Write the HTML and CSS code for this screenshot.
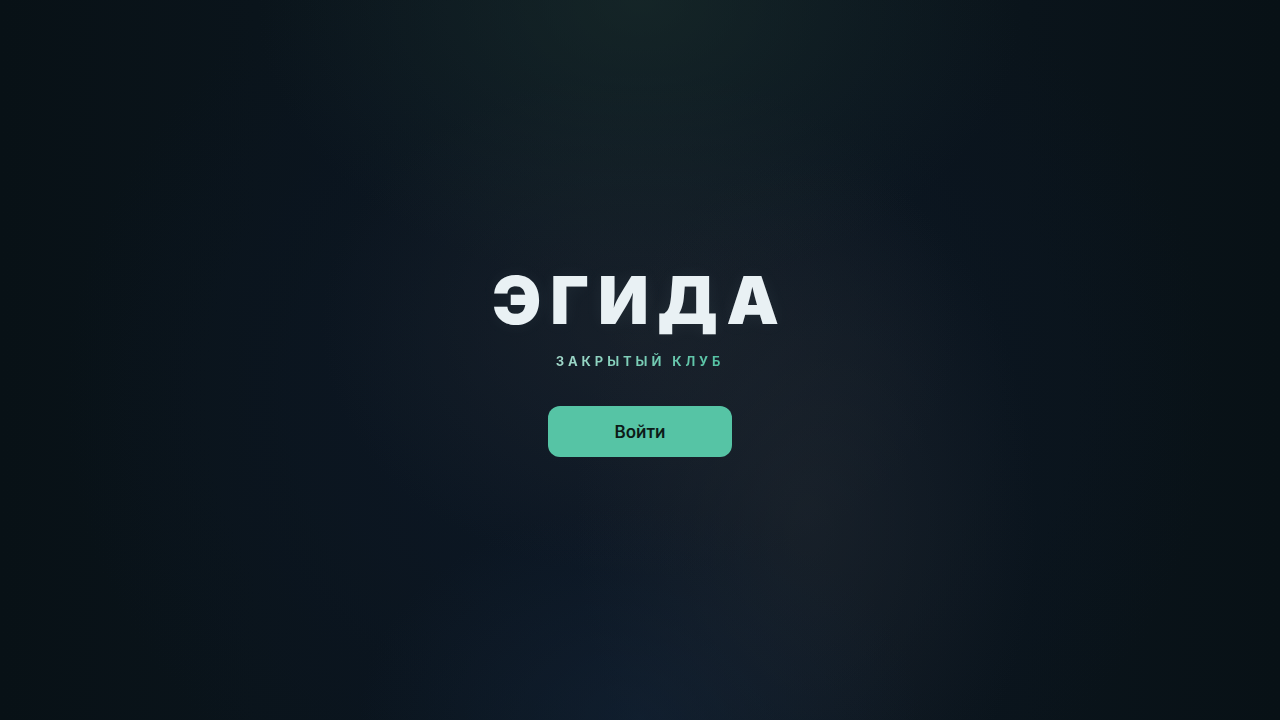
FILE: index.html
```html
<!DOCTYPE html>
<html lang="ru">
<head>
<meta charset="utf-8">
<title>Эгида</title>
<link rel="stylesheet" href="styles.css">
</head>
<body>
<main class="hero">
  <h1 class="title">ЭГИДА</h1>
  <p class="subtitle">ЗАКРЫТЫЙ КЛУБ</p>
  <button class="enter">Войти</button>
</main>
</body>
</html>
```

FILE: styles.css
```css
html, body {
  margin: 0;
  height: 100%;
}
body {
  font-family: Inter, "Noto Sans", sans-serif;
  background-color: #0a131b;
  background-image:
    radial-gradient(ellipse 30% 40% at 50% 0%, rgba(30, 52, 46, 0.5), rgba(30, 52, 46, 0) 100%),
    radial-gradient(ellipse 22% 30% at 50% 100%, rgba(22, 40, 62, 0.45), rgba(22, 40, 62, 0) 100%),
    radial-gradient(ellipse 18% 50% at 63% 72%, rgba(38, 44, 50, 0.45), rgba(38, 44, 50, 0) 100%),
    radial-gradient(ellipse 25% 35% at 50% 45%, rgba(34, 40, 46, 0.5), rgba(34, 40, 46, 0) 100%),
    radial-gradient(ellipse 45% 70% at 50% 55%, rgba(13, 24, 38, 1), rgba(11, 21, 32, 0.6) 70%, rgba(8, 16, 22, 0) 100%),
    linear-gradient(90deg, #081116 0%, #0a141b 20%, #0b1620 50%, #0a141b 80%, #081116 100%);
}
.hero {
  box-sizing: border-box;
  height: 100%;
  padding-top: 4px;
  display: flex;
  flex-direction: column;
  align-items: center;
  justify-content: center;
}
.title {
  margin: 0;
  font-size: 66px;
  font-weight: 900;
  letter-spacing: 0.135em;
  line-height: 1;
  color: #e9f1f4;
  text-shadow: 0 0 18px rgba(200, 230, 240, 0.06);
}
.subtitle {
  margin: 20px 0 0;
  font-size: 13px;
  font-weight: 700;
  letter-spacing: 0.3em;
  line-height: 16px;
  background: linear-gradient(90deg, #a2d8ca, #52c2a2);
  -webkit-background-clip: text;
  background-clip: text;
  color: transparent;
}
.enter {
  margin-top: 37px;
  width: 184px;
  height: 51px;
  border: 0;
  border-radius: 12px;
  background: #56c4a5;
  color: #0d1b18;
  font-family: Inter, "Noto Sans", sans-serif;
  font-size: 17px;
  font-weight: 600;
  cursor: pointer;
}
```
